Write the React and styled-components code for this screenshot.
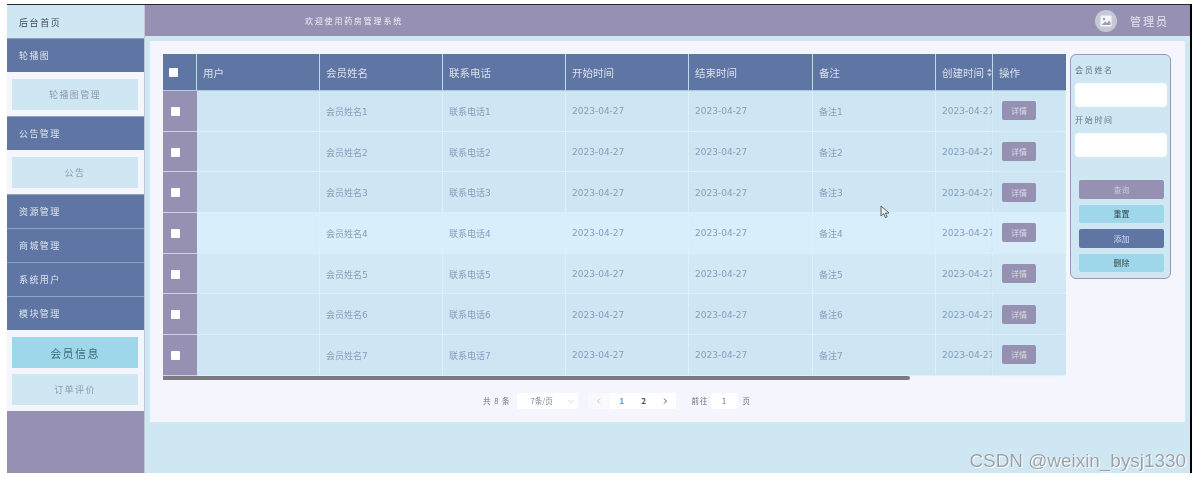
import React from "react";
import styled, { createGlobalStyle } from "styled-components";

const Global = createGlobalStyle`
  html, body { margin: 0; padding: 0; background: #fff; overflow: hidden; }
  * { box-sizing: border-box; }
  body { font-family: "DejaVu Sans", "Noto Sans CJK SC", sans-serif; }
`;

const Stage = styled.div`
  position: relative;
  width: 1202px;
  height: 481px;
  padding: 4px 12px 8px 7px;
`;
const Frame = styled.div`
  display: flex;
  width: 100%;
  height: 100%;
  border-top: 1px solid #23262e;
  box-shadow: 2px 0 0 #000;
  background: #cfe6f3;
  filter: blur(0.6px);
`;
const Sidebar = styled.aside`
  display: flex;
  flex-direction: column;
  width: 138px;
  flex: none;
  background: #f4f5fd;
  border-right: 1px solid #c4c6d4;
`;
const Logo = styled.div`
  display: flex;
  align-items: center;
  height: 33px;
  padding: 2px 0 0 12px;
  background: #cfe6f3;
  color: #3f4a57;
  font: 9px "Noto Sans CJK SC", sans-serif;
  letter-spacing: 1.6px;
`;
const NavTitle = styled.div`
  display: flex;
  align-items: center;
  height: 34px;
  padding: 0 0 1px 12px;
  background: #5f75a3;
  border-top: 1px solid #8ea3c4;
  color: #dfe6ef;
  font: 9px "Noto Sans CJK SC", sans-serif;
  letter-spacing: 1.4px;
`;
const SubPanel = styled.div`
  display: flex;
  flex-direction: column;
  gap: 6px;
  padding: 7px 6px 6px 5px;
`;
const SubItem = styled.div`
  display: flex;
  align-items: center;
  justify-content: center;
  height: 31px;
  background: ${p => (p.$active ? "#9ed6ea" : "#cfe6f3")};
  color: ${p => (p.$active ? "#3f6a78" : "#8d9aac")};
  font: ${p => (p.$active ? "11px" : "9px")} "Noto Sans CJK SC", sans-serif;
  letter-spacing: 1.4px;
`;
const SideFill = styled.div`
  flex: 1;
  background: #9690b2;
`;
const Right = styled.div`
  display: flex;
  flex-direction: column;
  flex: 1;
  min-width: 0;
`;
const TopBar = styled.header`
  display: flex;
  align-items: center;
  height: 31px;
  flex: none;
  padding-left: 160px;
  background: #9690b2;
  color: #eef0f6;
  font: 8px "Noto Sans CJK SC", sans-serif;
  letter-spacing: 1.8px;
`;
const TopRight = styled.div`
  display: flex;
  align-items: center;
  gap: 13px;
  margin-left: auto;
  padding-right: 21px;
  font-size: 11px;
  letter-spacing: 2px;
  color: #e3e6ee;
`;
const Avatar = styled.div`
  display: flex;
  align-items: center;
  justify-content: center;
  width: 22px;
  height: 22px;
  border-radius: 50%;
  background: #c5c9d6;
`;
const Body = styled.main`
  flex: 1;
  padding: 5px 5px 0 5px;
  min-height: 0;
`;
const Panel = styled.section`
  display: flex;
  flex-direction: column;
  height: 381px;
  padding: 13px 12px 0 13px;
  background: #f4f5fd;
`;
const ContentRow = styled.div`
  display: flex;
  gap: 4px;
  align-items: flex-start;
`;
const TableArea = styled.div`
  width: 903px;
  flex: none;
`;
const Grid = styled.div`
  display: grid;
  grid-template-columns: 34px 123px 123px 123px 123px 124px 123px 57px 73px;
`;
const HeadCell = styled.div`
  display: flex;
  align-items: center;
  gap: 3px;
  height: 37px;
  padding: 0 0 0 6px;
  background: #5f75a3;
  border-right: ${p => (p.$last ? "none" : "1px solid #b9dcec")};
  border-bottom: 1px solid #a9cbe0;
  color: #d8e0ea;
  font: 10.5px "DejaVu Sans", "Noto Sans CJK SC", sans-serif;
  white-space: nowrap;
  overflow: hidden;
`;
const Check = styled.span`
  display: block;
  width: 9px;
  height: 9px;
  background: #fff;
  border-radius: 1px;
`;
const Cell = styled.div`
  display: flex;
  align-items: center;
  height: 40.7px;
  padding: 1px 0 0 6px;
  background: ${p => p.$bg};
  border-right: 1px solid #d8f1fb;
  border-bottom: 1px solid #d8f1fb;
  color: #8a9cbb;
  font: 9px "DejaVu Sans", "Noto Sans CJK SC", sans-serif;
  white-space: nowrap;
  overflow: hidden;
`;
const CheckCell = styled(Cell)`
  padding-left: 8px;
  background: #9690b2;
  border-right: none;
  border-bottom: 1px solid #c8d4e4;
`;
const OpCell = styled(Cell)`
  padding: 0 0 0 9px;
  border-right: none;
  box-shadow: -2px 0 3px -2px rgba(120, 140, 170, 0.15);
`;
const DetailButton = styled.button`
  width: 34px;
  height: 19px;
  padding: 0;
  border: none;
  border-radius: 2px;
  background: #9690b2;
  color: #d6d8e6;
  font: 8px "Noto Sans CJK SC", sans-serif;
`;
const ScrollBar = styled.div`
  width: 747px;
  height: 4px;
  border-radius: 0 2px 2px 0;
  background: #7c7c80;
`;
const Pager = styled.div`
  display: flex;
  align-items: center;
  height: 42px;
  padding: 0 0 0 320px;
  color: #6f7480;
  font: 7.5px "Noto Sans CJK SC", sans-serif;
`;
const PagerText = styled.span`
  margin-left: ${p => p.$gap || 0}px;
  letter-spacing: 1px;
  white-space: nowrap;
`;
const PageSelect = styled.div`
  display: flex;
  align-items: center;
  justify-content: space-between;
  width: 61px;
  height: 16px;
  margin: 0 10px 0 6px;
  padding: 0 3px 0 14px;
  background: #fff;
  border-radius: 2px;
  color: #7a7f8c;
`;
const PageBtn = styled.div`
  display: flex;
  align-items: center;
  justify-content: center;
  width: ${p => p.$w}px;
  height: 16px;
  background: ${p => (p.$dim ? "#f8f8fd" : "#fff")};
  color: ${p => p.$color || "#444a55"};
  font-weight: 700;
  font-size: 8px;
`;
const JumpInput = styled.div`
  display: flex;
  align-items: center;
  justify-content: center;
  width: 27px;
  height: 16px;
  margin: 0 5px 0 2px;
  background: #fff;
  border-radius: 2px;
  font-size: 8px;
`;
const Search = styled.div`
  display: flex;
  flex-direction: column;
  width: 101px;
  height: 225px;
  padding: 9px 4px 0 4px;
  background: #cfe6f3;
  border: 1px solid #9a97bb;
  border-radius: 6px;
`;
const SearchLabel = styled.div`
  height: 19px;
  color: #68727f;
  font: 8px/12px "Noto Sans CJK SC", sans-serif;
  letter-spacing: 1.7px;
`;
const SearchInput = styled.div`
  width: 92px;
  height: 24px;
  margin-bottom: 7px;
  background: #fff;
  border-radius: 4px;
`;
const ActionStack = styled.div`
  display: flex;
  flex-direction: column;
  gap: 6px;
  margin: 16px 2px 0 4px;
`;
const ActionButton = styled.button`
  height: 18.5px;
  padding: 0;
  border: none;
  border-radius: 2px;
  background: ${p => p.$bg};
  color: ${p => p.$color};
  font: 8px "Noto Sans CJK SC", sans-serif;
`;
const Watermark = styled.div`
  position: absolute;
  right: 16px;
  top: 450px;
  color: #9aa2a9;
  font: 18.9px "Liberation Sans", sans-serif;
  text-shadow: 0 0 1px #fff, 1px 1px 0 #fff;
  white-space: nowrap;
`;
const Cursor = styled.svg`
  position: absolute;
  left: 880px;
  top: 205px;
`;

const rowBg = ["#cee6f3", "#cee6f3", "#cee6f3", "#d9eefb", "#d2e8f4", "#cee6f3", "#cee6f3"];

function Row({ n }) {
  const bg = rowBg[n - 1];
  return (
    <>
      <CheckCell $bg="#9690b2"><Check /></CheckCell>
      <Cell $bg={bg} />
      <Cell $bg={bg}>会员姓名{n}</Cell>
      <Cell $bg={bg}>联系电话{n}</Cell>
      <Cell $bg={bg}>2023-04-27</Cell>
      <Cell $bg={bg}>2023-04-27</Cell>
      <Cell $bg={bg}>备注{n}</Cell>
      <Cell $bg={bg}>2023-04-27</Cell>
      <OpCell $bg={bg}><DetailButton>详情</DetailButton></OpCell>
    </>
  );
}

export default function App() {
  return (
    <Stage>
      <Global />
      <Frame>
        <Sidebar>
          <Logo>后台首页</Logo>
          <NavTitle>轮播图</NavTitle>
          <SubPanel><SubItem>轮播图管理</SubItem></SubPanel>
          <NavTitle>公告管理</NavTitle>
          <SubPanel><SubItem>公告</SubItem></SubPanel>
          <NavTitle>资源管理</NavTitle>
          <NavTitle>商城管理</NavTitle>
          <NavTitle>系统用户</NavTitle>
          <NavTitle>模块管理</NavTitle>
          <SubPanel>
            <SubItem $active>会员信息</SubItem>
            <SubItem>订单评价</SubItem>
          </SubPanel>
          <SideFill />
        </Sidebar>
        <Right>
          <TopBar>
            欢迎使用药房管理系统
            <TopRight>
              <Avatar>
                <svg width="12" height="12" viewBox="0 0 12 12">
                  <rect x="0.5" y="0.5" width="11" height="11" rx="1" fill="#f4f6fa" />
                  <circle cx="4" cy="4" r="1.2" fill="#9aa0b4" />
                  <path d="M1.5 10 L5 6.5 L7 8 L9 5.5 L10.5 7.5 V10 Z" fill="#9aa0b4" />
                </svg>
              </Avatar>
              管理员
            </TopRight>
          </TopBar>
          <Body>
            <Panel>
              <ContentRow>
                <TableArea>
                  <Grid>
                    <HeadCell><Check /></HeadCell>
                    <HeadCell>用户</HeadCell>
                    <HeadCell>会员姓名</HeadCell>
                    <HeadCell>联系电话</HeadCell>
                    <HeadCell>开始时间</HeadCell>
                    <HeadCell>结束时间</HeadCell>
                    <HeadCell>备注</HeadCell>
                    <HeadCell>
                      创建时间
                      <svg width="5" height="9" viewBox="0 0 5 9" style={{ flex: "none" }}>
                        <path d="M2.5 0.5 L5 3.5 H0 Z M2.5 8.5 L5 5.5 H0 Z" fill="#c2cddd" />
                      </svg>
                    </HeadCell>
                    <HeadCell $last>操作</HeadCell>
                    {[1, 2, 3, 4, 5, 6, 7].map(n => <Row key={n} n={n} />)}
                  </Grid>
                  <ScrollBar />
                  <Pager>
                    <PagerText>共 8 条</PagerText>
                    <PageSelect>
                      7条/页
                      <svg width="8" height="8" viewBox="0 0 8 8"><path d="M1.5 3 L4 5.5 L6.5 3" fill="none" stroke="#c6c9d2" strokeWidth="0.8" /></svg>
                    </PageSelect>
                    <PageBtn $w={22} $dim $color="#c5c8d2">
                      <svg width="8" height="8" viewBox="0 0 8 8"><path d="M5 1.5 L2.5 4 L5 6.5" fill="none" stroke="#c5c8d2" strokeWidth="1" /></svg>
                    </PageBtn>
                    <PageBtn $w={24} $color="#5b9bd8">1</PageBtn>
                    <PageBtn $w={20}>2</PageBtn>
                    <PageBtn $w={22}>
                      <svg width="8" height="8" viewBox="0 0 8 8"><path d="M3 1.5 L5.5 4 L3 6.5" fill="none" stroke="#555b66" strokeWidth="1" /></svg>
                    </PageBtn>
                    <PagerText $gap={16}>前往</PagerText>
                    <JumpInput>1</JumpInput>
                    <PagerText>页</PagerText>
                  </Pager>
                </TableArea>
                <Search>
                  <SearchLabel>会员姓名</SearchLabel>
                  <SearchInput />
                  <SearchLabel>开始时间</SearchLabel>
                  <SearchInput />
                  <ActionStack>
                    <ActionButton $bg="#9690b2" $color="#c8cadb">查询</ActionButton>
                    <ActionButton $bg="#9ed6ea" $color="#3a4650">重置</ActionButton>
                    <ActionButton $bg="#5f75a3" $color="#d6dcea">添加</ActionButton>
                    <ActionButton $bg="#9ed6ea" $color="#3a4650">删除</ActionButton>
                  </ActionStack>
                </Search>
              </ContentRow>
            </Panel>
          </Body>
        </Right>
      </Frame>
      <Cursor width="11" height="14" viewBox="0 0 11 14">
        <path d="M1 1 L1 11 L3.6 8.8 L5.4 12.6 L7.2 11.8 L5.4 8.2 L9 8 Z" fill="#e8eef4" stroke="#4a5058" strokeWidth="0.9" />
      </Cursor>
      <Watermark>CSDN @weixin_bysj1330</Watermark>
    </Stage>
  );
}
